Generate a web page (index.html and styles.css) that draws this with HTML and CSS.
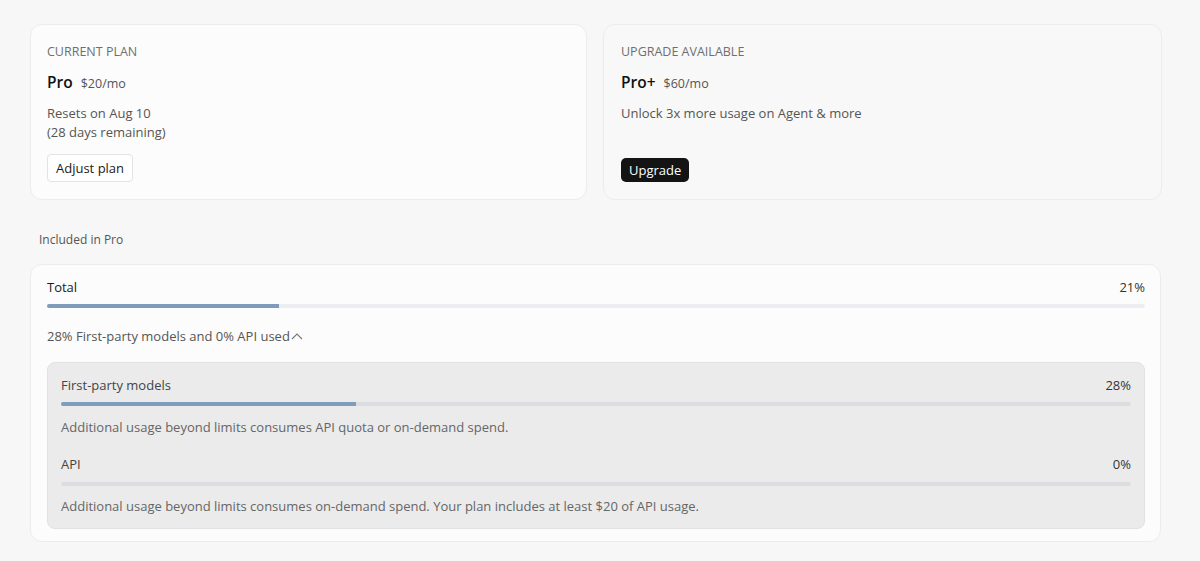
FILE: index.html
```html
<!DOCTYPE html>
<html lang="en">
<head>
<meta charset="utf-8">
<title>Usage</title>
<link rel="stylesheet" href="styles.css">
</head>
<body>
<main class="page">
  <section class="plans">
    <div class="card card-current">
      <div class="label">CURRENT PLAN</div>
      <div class="title-row"><span class="plan-name">Pro</span><span class="price">$20/mo</span></div>
      <div class="desc">Resets on Aug 10<br>(28 days remaining)</div>
      <button class="btn btn-outline">Adjust plan</button>
    </div>
    <div class="card card-upgrade">
      <div class="label">UPGRADE AVAILABLE</div>
      <div class="title-row"><span class="plan-name">Pro+</span><span class="price">$60/mo</span></div>
      <div class="desc">Unlock 3x more usage on Agent &amp; more</div>
      <button class="btn btn-dark">Upgrade</button>
    </div>
  </section>

  <div class="section-label">Included in Pro</div>

  <section class="usage-card">
    <div class="row"><span class="row-name">Total</span><span class="row-pct">21%</span></div>
    <div class="bar"><div class="fill" style="width:21.1%"></div></div>
    <div class="summary">28% First-party models and 0% API used<svg class="chev" width="12" height="8" viewBox="0 0 12 8"><path d="M1 7 L6 2 L11 7" fill="none" stroke="#777" stroke-width="1.1"/></svg></div>
    <div class="breakdown">
      <div class="row"><span class="row-name sub">First-party models</span><span class="row-pct">28%</span></div>
      <div class="bar bar-sub"><div class="fill" style="width:27.6%"></div></div>
      <div class="note">Additional usage beyond limits consumes API quota or on-demand spend.</div>
      <div class="row row-api"><span class="row-name sub">API</span><span class="row-pct">0%</span></div>
      <div class="bar bar-sub bar-api"><div class="fill" style="width:0%"></div></div>
      <div class="note">Additional usage beyond limits consumes on-demand spend. Your plan includes at least $20 of API usage.</div>
    </div>
  </section>
</main>
</body>
</html>
```

FILE: styles.css
```css
* { box-sizing: border-box; }
html, body { margin: 0; padding: 0; }
body {
  background: #f7f7f7;
  font-family: "Open Sans", "Noto Sans", sans-serif;
  color: #1a1a1a;
  font-size: 13px;
}
.page {
  width: 1132px;
  margin-left: 30px;
  padding-top: 24px;
}
.plans {
  display: grid;
  grid-template-columns: 557px 559px;
  gap: 16px;
}
.card {
  border: 1px solid #ececec;
  border-radius: 12px;
  padding: 17px 17px 17px 16px;
  display: flex;
  flex-direction: column;
  align-items: flex-start;
  height: 176px;
}
.card-current { background: #fcfcfc; }
.card-upgrade { background: #f8f8f8; padding-left: 17px; }
.label {
  font-size: 12.5px;
  line-height: 20px;
  color: #6f6f6f;
}
.title-row {
  margin-top: 8px;
  line-height: 24px;
  display: flex;
  align-items: baseline;
  gap: 8px;
}
.plan-name {
  font-size: 15.5px;
  font-weight: 600;
  color: #111;
}
.price {
  font-size: 12.5px;
  color: #555;
}
.desc {
  margin-top: 8px;
  line-height: 19px;
  color: #555;
}
.btn {
  margin-top: auto;
  font-family: inherit;
  font-size: 13px;
  cursor: pointer;
}
.btn-outline {
  height: 28px;
  padding: 0 8px;
  background: #fff;
  border: 1px solid #e3e3e3;
  border-radius: 4px;
  color: #1a1a1a;
}
.btn-dark {
  height: 24px;
  padding: 0 8px;
  background: #141414;
  border: none;
  border-radius: 5px;
  color: #fff;
}
.section-label {
  margin: 32px 0 0 9px;
  font-size: 12px;
  line-height: 16px;
  color: #555;
}
.usage-card {
  margin-top: 16px;
  background: #fcfcfc;
  border: 1px solid #ececec;
  border-radius: 12px;
  padding: 12px 15px 12px 16px;
  width: 1131px;
}
.row {
  display: flex;
  justify-content: space-between;
  line-height: 20px;
}
.row-name { color: #1a1a1a; }
.row-name.sub { color: #444; }
.row-pct { color: #333; }
.bar {
  margin-top: 7px;
  height: 4px;
  background: #edeef2;
  border-radius: 2px;
  overflow: hidden;
}
.fill {
  height: 100%;
  background: #7f9cba;
}
.summary {
  margin-top: 18px;
  line-height: 20px;
  color: #555;
  display: flex;
  align-items: center;
}
.chev { margin-left: 1px; margin-top: -1px; }
.breakdown {
  margin-top: 16px;
  background: #ebebeb;
  border: 1px solid #e2e2e2;
  border-radius: 8px;
  padding: 12px 13px 12px;
}
.bar-sub { background: #dcdde1; }
.note {
  margin-top: 11px;
  line-height: 20px;
  color: #666;
}
.row-api { margin-top: 17px; }
.bar-api { margin-top: 8px; }
.bar-api + .note { margin-top: 10px; }
```
